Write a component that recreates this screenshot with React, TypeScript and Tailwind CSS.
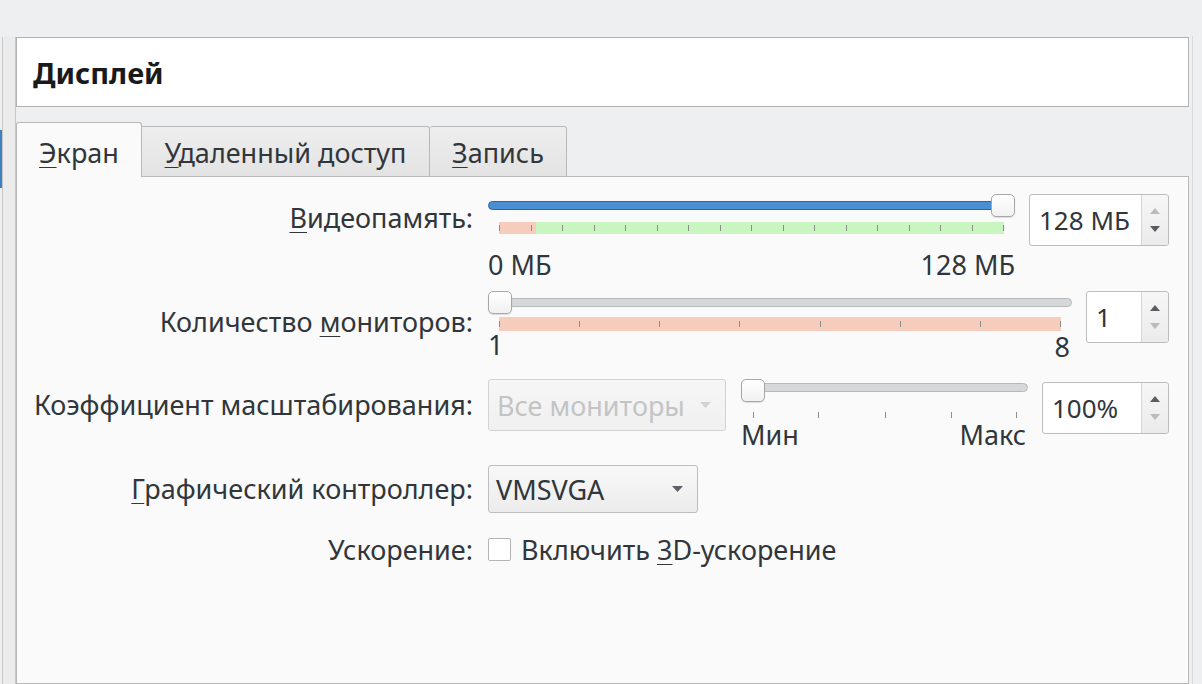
import React from "react";

function Tri({ dir, color }: { dir: "up" | "down"; color: string }) {
  return (
    <svg width="10" height="6" viewBox="0 0 10 6">
      {dir === "up" ? (
        <path d="M0 6 L5 0 L10 6 Z" fill={color} />
      ) : (
        <path d="M0 0 L5 6 L10 0 Z" fill={color} />
      )}
    </svg>
  );
}

function U({ children }: { children: React.ReactNode }) {
  return <span className="underline decoration-1 underline-offset-[4px]">{children}</span>;
}

function SpinBox({ value, cls, upOn, downOn }: { value: string; cls: string; upOn: boolean; downOn: boolean }) {
  return (
    <div className={`flex h-[52px] border border-[#bcbcbc] rounded-[3px] bg-white ${cls}`}>
      <div className="flex-1 flex items-center pl-[9px] text-[26px] leading-none">{value}</div>
      <div className="w-[27px] border-l border-[#d6d6d6] bg-gradient-to-b from-[#f6f6f6] to-[#ebebeb] flex flex-col items-center justify-center gap-[12px] rounded-r-[3px]">
        <Tri dir="up" color={upOn ? "#595d61" : "#b9bbbd"} />
        <Tri dir="down" color={downOn ? "#595d61" : "#b9bbbd"} />
      </div>
    </div>
  );
}

function TickBar({
  width,
  height,
  ticks,
  segments,
}: {
  width: number;
  height: number;
  ticks: number[];
  segments: { from: number; to: number; color: string }[];
}) {
  return (
    <svg width={width} height={height} viewBox={`0 0 ${width} ${height}`}>
      {segments.map((s, i) => (
        <rect key={i} x={s.from} y={0} width={s.to - s.from} height={height} fill={s.color} />
      ))}
      {ticks.map((x, i) => (
        <line key={i} x1={x + 0.5} x2={x + 0.5} y1={height / 2 - 3} y2={height / 2 + 3} stroke="#8d8d8d" strokeWidth={1} />
      ))}
    </svg>
  );
}

function Handle({ cls }: { cls: string }) {
  return (
    <div
      className={`absolute top-0 w-[24px] h-[23px] rounded-[5px] border border-[#a5a7a9] bg-gradient-to-b from-white to-[#f1f1f1] shadow-[0_1px_1px_rgba(0,0,0,0.12)] ${cls}`}
    />
  );
}

function Arrow({ color }: { color: string }) {
  return (
    <svg width="11" height="6" viewBox="0 0 11 6">
      <path d="M0 0 L5.5 6 L11 0 Z" fill={color} />
    </svg>
  );
}

export default function App() {
  const memTicks = Array.from({ length: 17 }, (_, i) => Math.round(i * (504 / 16)));
  const monTicks = Array.from({ length: 8 }, (_, i) => Math.round(i * (561 / 7)));
  const scaleTicks = [12, 77, 144, 210, 275];

  return (
    <div className="w-[1202px] h-[684px] overflow-hidden bg-[#eeeff0] flex font-['Noto_Sans',sans-serif] text-[#31363b]">
      {/* left strip */}
      <div className="w-[16px] shrink-0 pt-[37px] flex">
        <div className="w-[2px] flex flex-col">
          <div className="h-[93px]" />
          <div className="h-[58px] bg-[#3d7fc1]" />
        </div>
        <div className="flex-1 bg-[#ebebeb] border-l border-r border-[#c6c6c6]" />
      </div>

      {/* main */}
      <div className="flex-1 flex flex-col pt-[37px]">
        <div className="h-[70px] bg-white border border-[#b3b3b3] flex items-center pl-[16px]">
          <span className="text-[29px] font-bold text-[#1a1a1a] leading-none">Дисплей</span>
        </div>

        <div className="mt-[15px] flex items-end h-[55px] relative z-10 -mb-px">
          <div className="h-[55px] w-[126px] bg-[#fafafa] border border-b-0 border-[#b8b8b8] rounded-t-[3px] flex items-center justify-center text-[27px] leading-none pt-[4px]">
            <span>
              <U>Э</U>кран
            </span>
          </div>
          <div className="h-[51px] w-[288px] bg-gradient-to-b from-[#eeeeee] to-[#e3e3e3] border border-l-0 border-[#b8b8b8] rounded-tr-[3px] flex items-center justify-center text-[27px] leading-none pt-[2px]">
            <span>
              <U>У</U>даленный доступ
            </span>
          </div>
          <div className="h-[51px] w-[137px] bg-gradient-to-b from-[#eeeeee] to-[#e3e3e3] border border-l-0 border-[#b8b8b8] rounded-t-[3px] flex items-center justify-center text-[27px] leading-none pt-[2px]">
            <span>
              <U>З</U>апись
            </span>
          </div>
        </div>

        <div className="flex-1 bg-[#fafafa] border border-[#b8b8b8] pt-[17px] text-[27px] leading-[36px]">
          {/* Row 1 */}
          <div className="flex h-[97px]">
            <div className="w-[456px] text-right pt-[6px]">
              <U>В</U>идеопамять:
            </div>
            <div className="ml-[15px] flex">
              <div className="w-[527px] flex flex-col">
                <div className="relative h-[23px] w-[527px]">
                  <div className="absolute left-0 top-[7px] w-[520px] h-[9px] rounded-full bg-[#4a8fd3] border border-[#2d65a0]" />
                  <Handle cls="left-[503px]" />
                </div>
                <div className="mt-[5px] ml-[11px]">
                  <TickBar
                    width={505}
                    height={12}
                    ticks={memTicks}
                    segments={[
                      { from: 0, to: 37, color: "#f6cdbd" },
                      { from: 37, to: 505, color: "#c9f5c1" },
                    ]}
                  />
                </div>
                <div className="mt-[13px] flex justify-between">
                  <span>0 МБ</span>
                  <span>128 МБ</span>
                </div>
              </div>
              <SpinBox value="128 МБ" cls="w-[140px] ml-[14px]" upOn={false} downOn={true} />
            </div>
          </div>

          {/* Row 2 */}
          <div className="flex h-[88px]">
            <div className="w-[456px] text-right pt-[13px]">
              Количество <U>м</U>ониторов:
            </div>
            <div className="ml-[15px] flex">
              <div className="w-[584px] flex flex-col">
                <div className="relative h-[23px] w-[584px]">
                  <div className="absolute left-0 top-[7px] w-[584px] h-[9px] rounded-full bg-[#d6d8da] border border-[#b6b8ba]" />
                  <Handle cls="left-0" />
                </div>
                <div className="mt-[3px] ml-[11px]">
                  <TickBar
                    width={562}
                    height={14}
                    ticks={monTicks}
                    segments={[{ from: 0, to: 562, color: "#f6cdbd" }]}
                  />
                </div>
                <div className="-mt-[4px] flex justify-between pr-[2px]">
                  <span>1</span>
                  <span className="mt-[2px]">8</span>
                </div>
              </div>
              <SpinBox value="1" cls="w-[83px] ml-[14px]" upOn={true} downOn={false} />
            </div>
          </div>

          {/* Row 3 */}
          <div className="flex h-[86px]">
            <div className="w-[456px] text-right pt-[8px]">Коэффициент масштабирования:</div>
            <div className="ml-[15px] flex items-start">
              <div className="w-[238px] h-[52px] rounded-[3px] border border-[#d2d2d2] bg-gradient-to-b from-[#f6f6f6] to-[#f0f0f0] flex items-center justify-between pl-[8px] pr-[14px] text-[#c3c4c5] leading-none">
                <span>Все мониторы</span>
                <Arrow color="#d2d3d4" />
              </div>
              <div className="ml-[15px] w-[287px] flex flex-col">
                <div className="relative h-[23px] w-[287px]">
                  <div className="absolute left-0 top-[4px] w-[287px] h-[9px] rounded-full bg-[#d6d8da] border border-[#b6b8ba]" />
                  <Handle cls="left-0 -top-[1px]" />
                </div>
                <div className="mt-[7px]">
                  <TickBar width={287} height={12} ticks={scaleTicks} segments={[]} />
                </div>
                <div className="-mt-[4px] flex justify-between pr-[2px]">
                  <span>Мин</span>
                  <span>Макс</span>
                </div>
              </div>
              <SpinBox value="100%" cls="w-[127px] ml-[14px] mt-[3px]" upOn={true} downOn={false} />
            </div>
          </div>

          {/* Row 4 */}
          <div className="flex h-[73px]">
            <div className="w-[456px] text-right pt-[6px]">
              <U>Г</U>рафический контроллер:
            </div>
            <div className="ml-[15px]">
              <div className="w-[210px] h-[48px] rounded-[3px] border border-[#bdbdbd] bg-gradient-to-b from-[#f8f8f8] to-[#ececec] flex items-center justify-between pl-[7px] pr-[14px] leading-none">
                <span>VMSVGA</span>
                <Arrow color="#5d6165" />
              </div>
            </div>
          </div>

          {/* Row 5 */}
          <div className="flex h-[40px]">
            <div className="w-[456px] text-right -mt-[6px]">Ускорение:</div>
            <div className="ml-[15px] flex items-start">
              <div className="w-[23px] h-[23px] rounded-[2px] border border-[#b4b4b4] bg-white" />
              <span className="ml-[10px] -mt-[6px]">
                Включить <U>3</U>D-ускорение
              </span>
            </div>
          </div>
        </div>
      </div>

      {/* right strip */}
      <div className="w-[13px] shrink-0 pt-[36px] flex">
        <div className="w-[3px]" />
        <div className="w-px h-full bg-[#dadada]" />
      </div>
    </div>
  );
}
